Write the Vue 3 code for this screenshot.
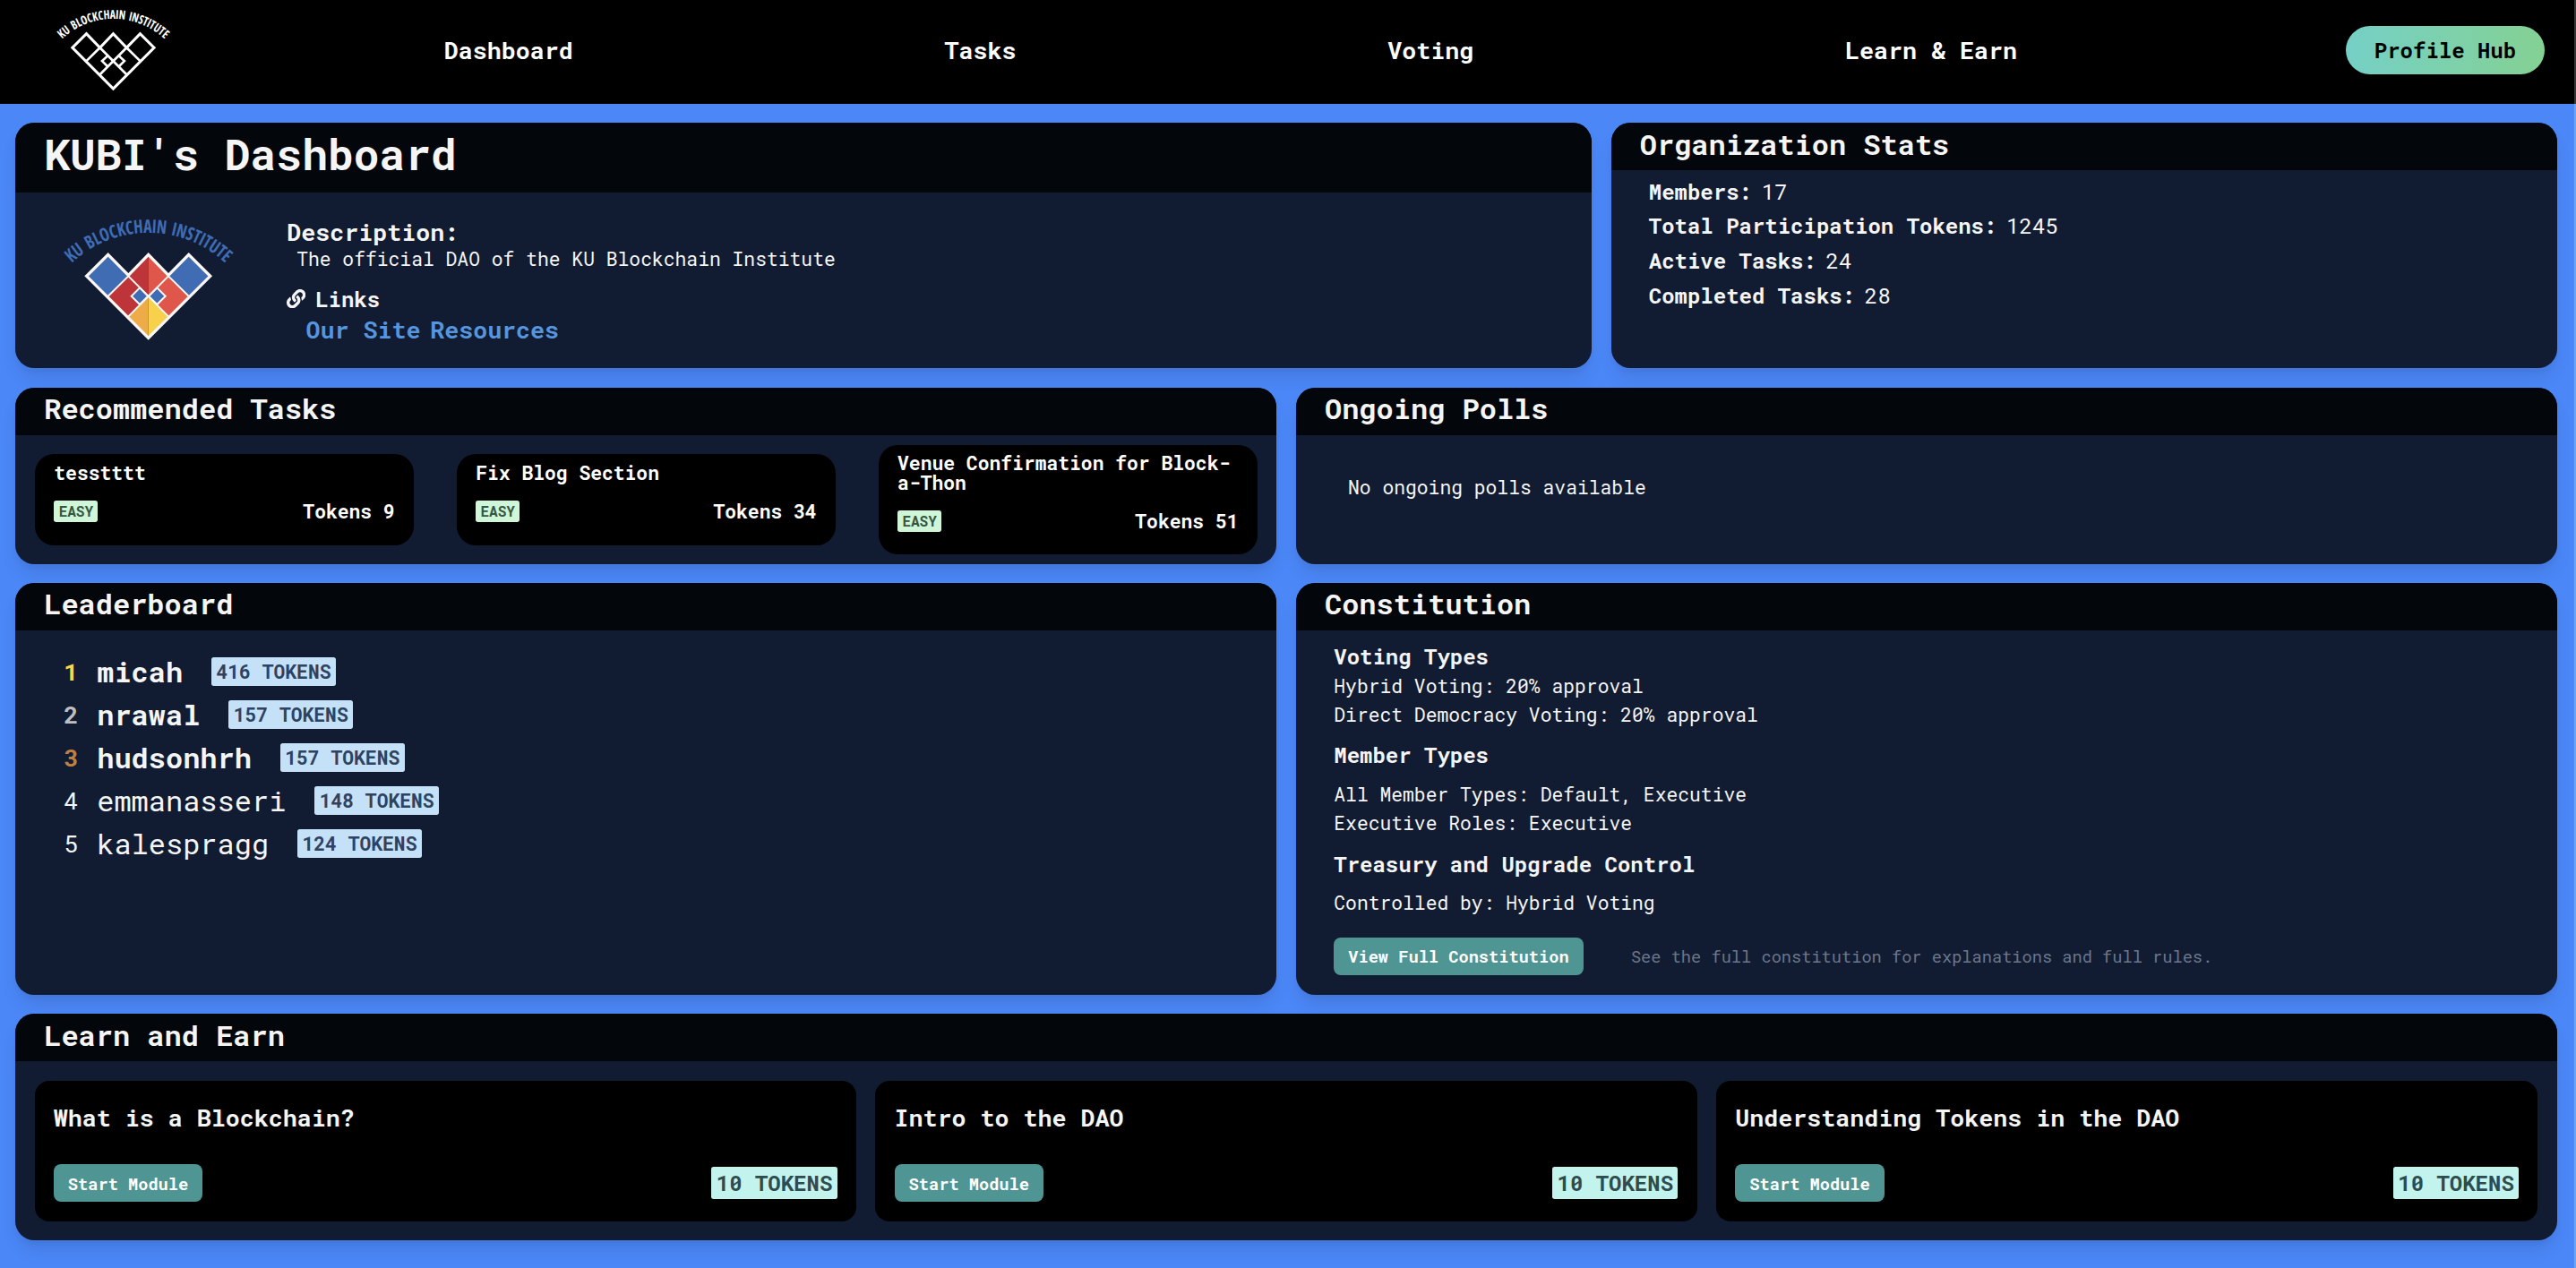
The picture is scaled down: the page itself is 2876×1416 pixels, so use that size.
<script setup>
const navLinks = ['Dashboard', 'Tasks', 'Voting', 'Learn & Earn']

const stats = [
  { label: 'Members:', value: '17' },
  { label: 'Total Participation Tokens:', value: '1245' },
  { label: 'Active Tasks:', value: '24' },
  { label: 'Completed Tasks:', value: '28' },
]

const tasks = [
  { name: 'tesstttt', difficulty: 'EASY', tokens: 9 },
  { name: 'Fix Blog Section', difficulty: 'EASY', tokens: 34 },
  { name: 'Venue Confirmation for Block-a-Thon', difficulty: 'EASY', tokens: 51 },
]

const leaders = [
  { rank: 1, name: 'micah', tokens: 416, medal: 'gold' },
  { rank: 2, name: 'nrawal', tokens: 157, medal: 'silver' },
  { rank: 3, name: 'hudsonhrh', tokens: 157, medal: 'bronze' },
  { rank: 4, name: 'emmanasseri', tokens: 148, medal: '' },
  { rank: 5, name: 'kalespragg', tokens: 124, medal: '' },
]

const modules = [
  { name: 'What is a Blockchain?', tokens: 10 },
  { name: 'Intro to the DAO', tokens: 10 },
  { name: 'Understanding Tokens in the DAO', tokens: 10 },
]
</script>

<template>
  <div class="app">
    <nav class="nav">
      <svg class="nav-logo" viewBox="0 0 635 485">
        <path id="arc-light" d="M 60 191 A 377 377 0 0 1 574 191" fill="none" />
        <text class="arc-text" fill="#fff">
          <textPath href="#arc-light" textLength="566" lengthAdjust="spacingAndGlyphs">KU BLOCKCHAIN INSTITUTE</textPath>
        </text>
        <g fill="none" stroke="#fff" stroke-width="12">
          <path d="M182 165 L250 235 L317 165 L384 235 L452 165 L522 235 L317 441 L112 235 Z" stroke-width="14" />
          <path d="M182 302 L250 235 L384 370 M452 302 L384 235 L250 370" />
          <path d="M290 275 L261 302 L290 331 M344 275 L373 302 L344 331" />
        </g>
      </svg>
      <div class="nav-links">
        <a v-for="link in navLinks" :key="link" class="nav-link">{{ link }}</a>
      </div>
      <button class="profile">Profile Hub</button>
    </nav>

    <main class="grid">
      <section class="panel about">
        <header class="head head-lg"><h1>KUBI's Dashboard</h1></header>
        <div class="about-body">
          <svg class="org-logo" viewBox="0 0 635 485">
            <path id="arc-blue" d="M 60 191 A 377 377 0 0 1 574 191" fill="none" />
            <text class="arc-text" fill="#3f6cb3">
              <textPath href="#arc-blue" textLength="566" lengthAdjust="spacingAndGlyphs">KU BLOCKCHAIN INSTITUTE</textPath>
            </text>
            <path d="M182 168 L249 235 L182 302 L115 235 Z" fill="#3f6cb3" />
            <path d="M452 168 L519 235 L452 302 L385 235 Z" fill="#3f6cb3" />
            <path d="M317 168 L317 302 L250 235 Z" fill="#bd3439" />
            <path d="M317 168 L384 235 L317 302 Z" fill="#df574b" />
            <path d="M250 235 L317 302 L250 370 L182 302 Z" fill="#bd3439" />
            <path d="M384 235 L452 302 L384 370 L317 302 Z" fill="#df574b" />
            <path d="M317 302 L317 438 L250 370 Z" fill="#eeac48" />
            <path d="M317 302 L384 370 L317 438 Z" fill="#f7d04c" />
            <g stroke="#fbf7f4" stroke-width="6" fill="none">
              <path d="M288 274 L316 302 L288 330 L260 302 Z" fill="#3f6cb3" />
              <path d="M346 274 L374 302 L346 330 L318 302 Z" fill="#3f6cb3" />
              <path d="M182 302 L250 235 L384 370 M452 302 L384 235 L250 370" />
              <path d="M182 163 L250 232 L317 163 L384 232 L452 163 L524 235 L317 442 L110 235 Z" stroke-width="10" />
            </g>
          </svg>
          <div class="about-text">
            <h2 class="desc-title">Description:</h2>
            <p class="desc">The official DAO of the KU Blockchain Institute</p>
            <div class="links-title">
              <svg class="link-icon" viewBox="0 0 512 512" fill="currentColor">
                <path d="M326.612 185.391c59.747 59.809 58.927 155.698.36 214.59-.11.12-.24.25-.36.37l-67.2 67.2c-59.27 59.27-155.699 59.262-214.96 0-59.27-59.26-59.27-155.7 0-214.96l37.106-37.106c9.84-9.84 26.786-3.3 27.294 10.606.648 17.722 3.826 35.527 9.69 52.721 1.986 5.822.567 12.262-3.783 16.612l-13.087 13.087c-28.026 28.026-28.905 73.66-1.155 101.96 28.024 28.579 74.086 28.749 102.325.51l67.2-67.19c28.191-28.191 28.073-73.757 0-101.83-3.701-3.694-7.429-6.564-10.341-8.569a16.037 16.037 0 0 1-6.947-12.606c-.396-10.567 3.348-21.456 11.698-29.806l21.054-21.055c5.521-5.521 14.182-6.199 20.584-1.731a152.482 152.482 0 0 1 20.522 17.197zM467.547 44.449c-59.261-59.262-155.69-59.27-214.96 0l-67.2 67.2c-.12.12-.25.25-.36.37-58.566 58.892-59.387 154.781.36 214.59a152.454 152.454 0 0 0 20.521 17.196c6.402 4.468 15.064 3.789 20.584-1.731l21.054-21.055c8.35-8.35 12.094-19.239 11.698-29.806a16.037 16.037 0 0 0-6.947-12.606c-2.912-2.005-6.64-4.875-10.341-8.569-28.073-28.073-28.191-73.639 0-101.83l67.2-67.19c28.239-28.239 74.3-28.069 102.325.51 27.75 28.3 26.872 73.934-1.155 101.96l-13.087 13.087c-4.35 4.35-5.769 10.79-3.783 16.612 5.864 17.194 9.042 34.999 9.69 52.721.509 13.906 17.454 20.446 27.294 10.606l37.106-37.106c59.271-59.259 59.271-155.699.001-214.959z" />
              </svg>
              <span>Links</span>
            </div>
            <div class="links">
              <a>Our Site</a>
              <a>Resources</a>
            </div>
          </div>
        </div>
      </section>

      <section class="panel org">
        <header class="head"><h2>Organization Stats</h2></header>
        <div class="stats">
          <div v-for="s in stats" :key="s.label" class="stat">
            <strong>{{ s.label }}</strong><span>{{ s.value }}</span>
          </div>
        </div>
      </section>

      <section class="panel half tasks-panel">
        <header class="head"><h2>Recommended Tasks</h2></header>
        <div class="tasks">
          <article v-for="t in tasks" :key="t.name" class="task">
            <h3>{{ t.name }}</h3>
            <div class="task-foot">
              <span class="badge easy">{{ t.difficulty }}</span>
              <strong>Tokens {{ t.tokens }}</strong>
            </div>
          </article>
        </div>
      </section>

      <section class="panel half">
        <header class="head"><h2>Ongoing Polls</h2></header>
        <p class="no-polls">No ongoing polls available</p>
      </section>

      <section class="panel half board-panel">
        <header class="head"><h2>Leaderboard</h2></header>
        <div class="board">
          <div v-for="l in leaders" :key="l.name" class="leader" :class="{ top: l.medal }">
            <span class="rank" :class="l.medal">{{ l.rank }}</span>
            <span class="leader-name">{{ l.name }}</span>
            <span class="badge blue">{{ l.tokens }} TOKENS</span>
          </div>
        </div>
      </section>

      <section class="panel half">
        <header class="head"><h2>Constitution</h2></header>
        <div class="constitution">
          <div>
            <h3>Voting Types</h3>
            <p>Hybrid Voting: 20% approval</p>
            <p>Direct Democracy Voting: 20% approval</p>
          </div>
          <h3>Member Types</h3>
          <div>
            <p>All Member Types: Default, Executive</p>
            <p>Executive Roles: Executive</p>
          </div>
          <h3>Treasury and Upgrade Control</h3>
          <p>Controlled by: Hybrid Voting</p>
          <div class="const-foot">
            <button class="btn">View Full Constitution</button>
            <span class="hint">See the full constitution for explanations and full rules.</span>
          </div>
        </div>
      </section>

      <section class="panel full">
        <header class="head"><h2>Learn and Earn</h2></header>
        <div class="modules">
          <article v-for="m in modules" :key="m.name" class="module">
            <h3>{{ m.name }}</h3>
            <div class="module-foot">
              <button class="btn">Start Module</button>
              <span class="badge teal">{{ m.tokens }} TOKENS</span>
            </div>
          </article>
        </div>
      </section>
    </main>
    <div class="scroll-edge"></div>
  </div>
</template>

<style>
html {
  font-size: 21.3333px;
}
body {
  background: #4b87f7;
}
</style>

<style scoped>
.app {
  position: relative;
  width: 2876px;
  height: 1416px;
  overflow: hidden;
  background: #4b87f7;
  color: #f5f5f5;
  font-family: 'Roboto Mono', 'DejaVu Sans Mono', 'Liberation Mono', monospace;
  font-size: 1rem;
  line-height: 1.5;
}
h1, h2, h3, p {
  margin: 0;
}
button {
  border: 0;
  font-family: inherit;
  font-weight: 700;
}
.scroll-edge {
  position: absolute;
  top: 0;
  right: 0;
  width: 2px;
  height: 100%;
  background: rgba(255, 255, 255, 0.22);
}

/* navigation */
.nav {
  display: flex;
  align-items: center;
  height: 116px;
  padding: 0 35px 0 56.3px;
  box-sizing: border-box;
  background: #000;
}
.nav-logo {
  flex: none;
  width: 141.1px;
  height: 107.8px;
  margin-bottom: 7px;
}
.arc-text {
  font-family: 'Open Sans', 'Noto Sans', sans-serif;
  font-size: 62px;
  font-weight: 700;
  font-stretch: 75%;
  word-spacing: 8px;
}
.nav-links {
  display: flex;
  flex: 1;
  justify-content: space-between;
  margin: 0 367px 0 298.4px;
}
.nav-link {
  color: #fff;
  font-size: 1.25rem;
  font-weight: 700;
  line-height: 40px;
  margin-bottom: 4px;
}
.profile {
  width: 222px;
  height: 53.3px;
  margin-bottom: 4px;
  padding: 0;
  border-radius: 27px;
  background: linear-gradient(90deg, #75d0c6, #84d193);
  color: #000;
  font-size: 1.125rem;
}

/* panels */
.grid {
  display: grid;
  grid-template-columns: 1408px 330px 1056px;
  grid-template-rows: 274.2px 197px 460px 253px;
  column-gap: 21.8px;
  row-gap: 21.33px;
  width: 2838px;
  margin: 21px 0 0 17.2px;
}
.panel {
  display: flex;
  flex-direction: column;
  overflow: hidden;
  border-radius: 1rem;
  background: #111c33;
  box-shadow: 0 13px 20px -4px rgba(0, 0, 0, 0.1), 0 5px 8px -3px rgba(0, 0, 0, 0.05);
}
.about {
  grid-column: 1 / 3;
}
.half:nth-child(odd) {
  grid-column: 1;
}
.half:nth-child(even) {
  grid-column: 2 / 4;
}
.full {
  grid-column: 1 / 4;
}
.head {
  flex: none;
  box-sizing: border-box;
  height: 53.3px;
  padding: 4.6px 32px 0;
  background: #03060a;
}
.head h2 {
  font-size: 1.5rem;
  font-weight: 700;
  line-height: 1.2;
}
.head-lg {
  height: 78px;
  padding-top: 6.4px;
}
.head-lg h1 {
  font-size: 2.25rem;
  font-weight: 700;
  line-height: 1.2;
}

/* about */
.about-body {
  display: flex;
  padding: 15px 0 0 43px;
}
.org-logo {
  flex: none;
  width: 211.7px;
  height: 161.7px;
}
.about-text {
  margin: 9px 0 0 48.3px;
}
.desc-title {
  font-size: 1.25rem;
  line-height: 40px;
}
.desc {
  padding-left: 11px;
  line-height: 20px;
}
.links-title {
  display: flex;
  align-items: center;
  gap: 10.7px;
  margin-top: 16.6px;
  font-size: 1.125rem;
  font-weight: 700;
  line-height: 36px;
}
.link-icon {
  width: 21.3px;
  height: 21.3px;
}
.links {
  display: flex;
  gap: 10.7px;
  padding-left: 21.3px;
  color: #5596de;
  font-size: 1.25rem;
  font-weight: 700;
  line-height: 32px;
}

/* stats */
.stats {
  padding: 4.4px 42px 0;
  font-size: 1.125rem;
}
.stat {
  display: flex;
  gap: 10.7px;
  line-height: 38.67px;
}

/* badges */
.badge {
  padding: 0 5.33px;
  border-radius: 2.67px;
  font-weight: 700;
  white-space: nowrap;
}
.easy {
  background: #cff6d8;
  color: #345643;
  font-size: 0.75rem;
  line-height: 24px;
}
.blue {
  background: #c5e1f7;
  color: #2e4262;
  line-height: 32px;
}
.teal {
  background: #c2f3ec;
  color: #2e4c4f;
  font-size: 1.125rem;
  line-height: 36px;
}

/* recommended tasks */
.tasks {
  display: flex;
  flex: 1;
  align-items: center;
  justify-content: space-between;
  padding: 0.5px 21.33px 0 21.8px;
}
.task {
  box-sizing: border-box;
  width: 31%;
  padding: 10.67px 21.33px 21.33px;
  border-radius: 1rem;
  background: #000;
  color: #fff;
}
.task h3 {
  font-size: 1rem;
  line-height: 21.33px;
}
.task-foot {
  display: flex;
  align-items: center;
  justify-content: space-between;
  margin-top: 16px;
  line-height: 32px;
}
.no-polls {
  padding: 43.6px 0 0 58px;
}

/* leaderboard */
.board {
  padding: 21.6px 54px 0;
}
.leader {
  display: flex;
  align-items: center;
  height: 48px;
}
.rank {
  width: 37px;
  font-size: 1.25rem;
}
.leader-name {
  margin-right: 32px;
  font-size: 1.5rem;
}
.top .rank,
.top .leader-name {
  font-weight: 700;
}
.gold { color: #f8d749; }
.silver { color: #bfbfbf; }
.bronze { color: #c08043; }

/* constitution */
.constitution {
  display: flex;
  flex-direction: column;
  gap: 10.67px;
  padding: 10.67px 42.3px 0;
}
.constitution h3 {
  font-size: 1.125rem;
  line-height: 36px;
}
.const-foot {
  display: flex;
  align-items: center;
  gap: 53.3px;
  margin-top: 10.67px;
}
.hint {
  color: #6c7689;
  font-size: 0.875rem;
}
.btn {
  height: 42.67px;
  padding: 0 16px;
  border-radius: 8px;
  background: #4f9593;
  color: #fff;
  font-size: 0.875rem;
  white-space: nowrap;
}

/* learn and earn */
.modules {
  display: grid;
  grid-template-columns: repeat(3, 1fr);
  gap: 21.33px;
  padding: 21.33px;
}
.module {
  display: flex;
  flex-direction: column;
  justify-content: space-between;
  box-sizing: border-box;
  height: 157px;
  padding: 25.3px 21.33px 21.33px;
  border-radius: 16px;
  background: #000;
}
.module h3 {
  font-size: 1.25rem;
  line-height: 1.2;
}
.module-foot {
  display: flex;
  align-items: center;
  justify-content: space-between;
}
</style>
